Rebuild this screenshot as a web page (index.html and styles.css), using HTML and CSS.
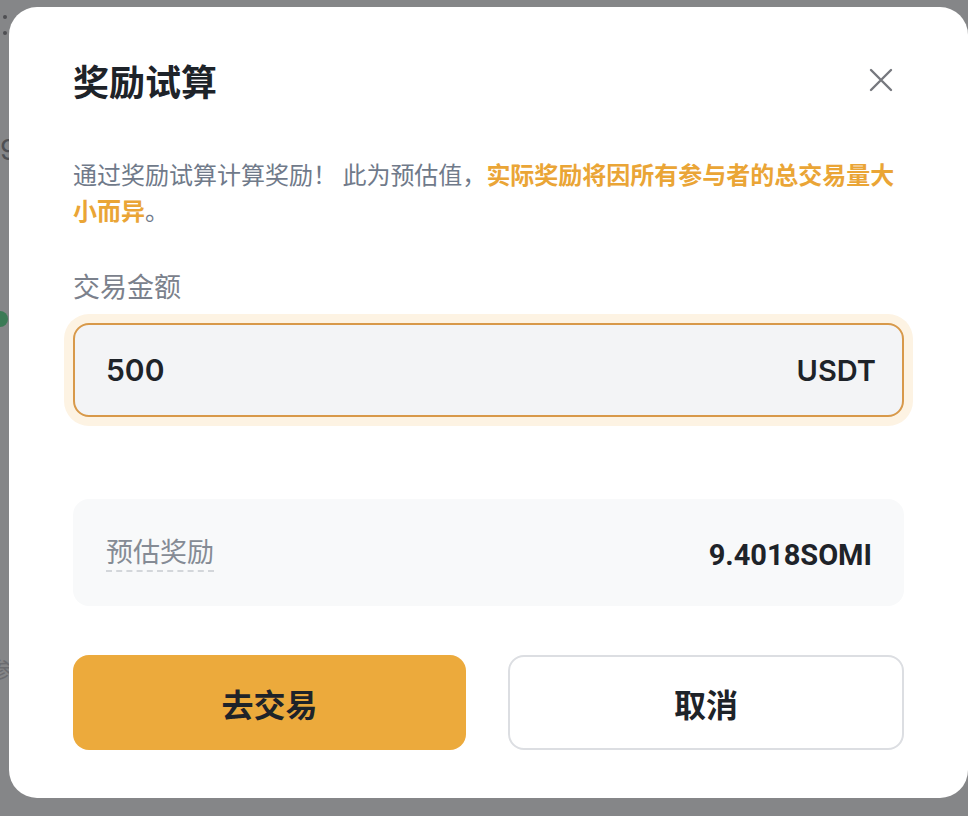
FILE: index.html
```html
<!DOCTYPE html>
<html lang="zh">
<head>
<meta charset="utf-8">
<title>奖励试算</title>
<link rel="stylesheet" href="styles.css">
</head>
<body>
<div class="backdrop" aria-hidden="true">
  <span class="bd-dot bd-dot1"></span>
  <span class="bd-dot bd-dot2"></span>
  <span class="bd-num">9</span>
  <span class="bd-green"></span>
  <span class="bd-char">参</span>
</div>
<div class="modal">
  <div class="header">
    <h1 class="title">奖励试算</h1>
    <svg class="close" width="24" height="24" viewBox="0 0 24 24" fill="none">
      <path d="M2 2L22 22M22 2L2 22" stroke="#76787E" stroke-width="2.4" stroke-linecap="round"/>
    </svg>
  </div>
  <p class="desc">通过奖励试算计算奖励！ 此为预估值，<span class="hl">实际奖励将因所有参与者的总交易量大小而异</span>。</p>
  <div class="label">交易金额</div>
  <div class="input">
    <span class="amount">500</span>
    <span class="unit">USDT</span>
  </div>
  <div class="estimate">
    <span class="est-label">预估奖励</span>
    <span class="est-value">9.4018SOMI</span>
  </div>
  <div class="actions">
    <button class="btn btn-primary">去交易</button>
    <button class="btn btn-secondary">取消</button>
  </div>
</div>
</body>
</html>
```
FILE: styles.css
```css
html, body {
  margin: 0;
  padding: 0;
}
body {
  background: #858688;
  width: 968px;
  height: 816px;
  overflow: hidden;
  position: relative;
  font-family: Inter, "Noto Sans CJK SC", sans-serif;
}
.backdrop {
  position: absolute;
  inset: 0;
  z-index: 0;
}
.bd-dot {
  position: absolute;
  width: 4px;
  height: 4px;
  border-radius: 50%;
  background: #4e4f52;
  left: 3px;
}
.bd-dot1 { top: 15px; }
.bd-dot2 { top: 31px; }
.bd-num {
  position: absolute;
  left: 0;
  top: 136px;
  font-size: 28px;
  color: #4f5054;
  line-height: 1;
}
.bd-green {
  position: absolute;
  left: -8px;
  top: 311px;
  width: 16px;
  height: 16px;
  border-radius: 50%;
  background: #3b7a55;
}
.bd-char {
  position: absolute;
  left: -10px;
  top: 657px;
  font-size: 22px;
  color: #6b6c70;
  line-height: 1;
  font-family: "Noto Sans CJK SC", sans-serif;
}
.modal {
  position: relative;
  z-index: 1;
  margin: 7px 0 0 9px;
  width: 959px;
  height: 791px;
  box-sizing: border-box;
  background: #ffffff;
  border-radius: 28px;
  padding: 49px 64px 0 64px;
}
.header {
  display: flex;
  align-items: center;
  justify-content: space-between;
  height: 48px;
}
.title {
  margin: 0;
  font-family: "Noto Sans CJK SC", sans-serif;
  font-size: 36px;
  line-height: 48px;
  font-weight: 700;
  color: #1e2329;
}
.close {
  margin-right: 11px;
}
.desc {
  margin: 52px 0 0 0;
  font-family: "Noto Sans CJK SC", sans-serif;
  font-size: 24px;
  line-height: 36px;
  color: #707a8a;
  font-weight: 400;
}
.hl {
  color: #eaa536;
  font-weight: 700;
}
.label {
  margin-top: 38px;
  font-family: "Noto Sans CJK SC", sans-serif;
  font-size: 27px;
  line-height: 40px;
  color: #7b818c;
}
.input {
  margin-top: 17px;
  height: 94px;
  box-sizing: border-box;
  border: 2px solid #d8994a;
  border-radius: 16px;
  background: #f3f4f6;
  box-shadow: 0 0 0 9px #fdf3e3;
  display: flex;
  align-items: center;
  justify-content: space-between;
  padding: 0 26px 0 31px;
}
.amount {
  font-size: 30px;
  font-weight: 600;
  color: #1e2329;
}
.unit {
  font-size: 29px;
  font-weight: 600;
  color: #1e2329;
}
.estimate {
  margin-top: 82px;
  height: 107px;
  box-sizing: border-box;
  background: #f8f9fa;
  border-radius: 16px;
  display: flex;
  align-items: center;
  justify-content: space-between;
  padding: 0 32px 0 33px;
}
.est-label {
  font-family: "Noto Sans CJK SC", sans-serif;
  font-size: 27px;
  line-height: 36px;
  color: #858b95;
  border-bottom: 2px dashed #d3d6da;
  padding-bottom: 1px;
}
.est-value {
  font-family: Roboto, sans-serif;
  font-size: 29px;
  font-weight: 700;
  color: #1e2329;
  margin-top: 4px;
}
.actions {
  margin-top: 49px;
  display: grid;
  grid-template-columns: 393px 396px;
  justify-content: space-between;
}
.btn {
  height: 95px;
  border-radius: 16px;
  font-family: "Noto Sans CJK SC", sans-serif;
  font-size: 32px;
  font-weight: 700;
  color: #1e2329;
  cursor: pointer;
}
.btn-primary {
  background: #ecaa3c;
  border: none;
}
.btn-secondary {
  background: #ffffff;
  border: 2px solid #dcdee2;
}
```
